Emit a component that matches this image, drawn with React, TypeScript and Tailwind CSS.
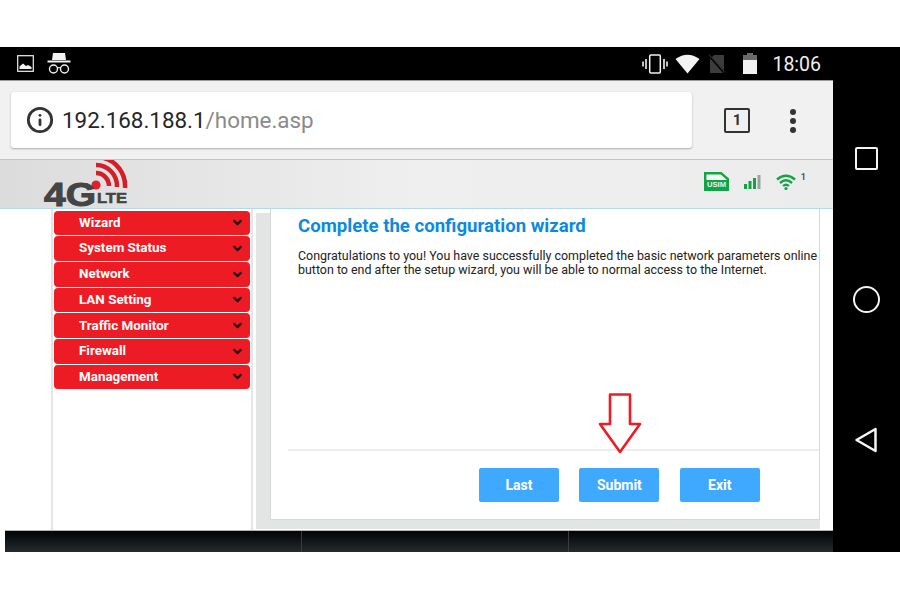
import React from 'react';
import { ChevronDown, Info } from 'lucide-react';

const menuItems = ['Wizard', 'System Status', 'Network', 'LAN Setting', 'Traffic Monitor', 'Firewall', 'Management'];
const roboto = { fontFamily: 'Roboto, sans-serif' };

const StatusBar = () => (
  <div className="flex h-[33px] items-center bg-black pl-[17px] pr-[12px]">
    <svg width="17" height="17" viewBox="0 0 17 17" className="mr-[13px]">
      <rect x="0.7" y="0.7" width="15.6" height="15.6" fill="none" stroke="#f2f2f2" strokeWidth="1.2" />
      <path d="M2.5 14 V11.5 L6 8.5 L9 11 L11 10 L14.5 12 V14 Z" fill="#f2f2f2" />
    </svg>
    <svg width="24" height="23" viewBox="0 0 24 23">
      <path d="M6 1 H18 L19 8 H5 Z" fill="#f2f2f2" />
      <rect x="0.5" y="8.5" width="23" height="2" fill="#f2f2f2" />
      <circle cx="6.5" cy="17" r="4" fill="none" stroke="#f2f2f2" strokeWidth="1.4" />
      <circle cx="17.5" cy="17" r="4" fill="none" stroke="#f2f2f2" strokeWidth="1.4" />
      <path d="M10.5 16 Q12 15 13.5 16" fill="none" stroke="#f2f2f2" strokeWidth="1.2" />
    </svg>
    <div className="ml-auto flex items-center">
      <svg width="26" height="20" viewBox="0 0 26 20">
        <rect x="7.7" y="1" width="10.6" height="18" rx="1" fill="none" stroke="#f2f2f2" strokeWidth="1.5" />
        <path d="M4 5 V15 M22 5 V15" stroke="#f2f2f2" strokeWidth="1.6" />
        <path d="M1 7.5 V12.5 M25 7.5 V12.5" stroke="#f2f2f2" strokeWidth="1.6" />
      </svg>
      <svg width="25" height="20" viewBox="0 0 25 20" className="ml-[7px]">
        <path d="M0.5 5 Q12.5 -3.5 24.5 5 L12.5 19.5 Z" fill="#f2f2f2" />
      </svg>
      <svg width="18" height="20" viewBox="0 0 18 20" className="ml-[8px]">
        <path d="M6 1 H16 V19 H2 V5 Z" fill="#3c3c3c" />
        <path d="M1 1.5 L17 19.5" stroke="#000" strokeWidth="2.2" />
        <path d="M1 0.5 L17 18.5" stroke="#3c3c3c" strokeWidth="1" />
      </svg>
      <svg width="14" height="21" viewBox="0 0 14 21" className="ml-[17px]">
        <path d="M4.5 0 H9.5 V2 H14 V21 H0 V2 H4.5 Z" fill="#f2f2f2" />
        <path d="M4.5 0 H9.5 V2 H14 V7 H0 V2 H4.5 Z" fill="#6a6a6a" />
      </svg>
      <span className="ml-[15px] mt-[2px] text-[19.5px] leading-none text-[#f0f0f0]" style={roboto}>18:06</span>
    </div>
  </div>
);

const Toolbar = () => (
  <div className="flex h-[80px] items-start border-t border-b border-[#9a9a9a] border-b-[#c4c4c4] bg-[#f1f1f1] pl-[11px] pt-[10px]">
    <div className="mt-px flex h-[56px] w-[681px] items-center rounded-[3px] bg-white pl-[15px] shadow-[0_1px_2px_rgba(0,0,0,0.3)]">
      <Info size={28} strokeWidth={2.4} className="text-[#333]" />
      <span className="ml-[8px] text-[22.4px] leading-none" style={roboto}>
        <span className="text-[#262626]">192.168.188.1</span>
        <span className="text-[#8a8a8a]">/home.asp</span>
      </span>
    </div>
    <div className="ml-[32px] mt-[17px] flex h-[25px] w-[26px] items-center justify-center rounded-[2px] border-[2.5px] border-[#333] text-[15px] font-bold text-[#333]" style={roboto}>1</div>
    <div className="ml-[40px] mt-[18px] flex flex-col gap-[3px]">
      <span className="h-[6px] w-[6px] rounded-full bg-[#333]" />
      <span className="h-[6px] w-[6px] rounded-full bg-[#333]" />
      <span className="h-[6px] w-[6px] rounded-full bg-[#333]" />
    </div>
  </div>
);

const RouterHeader = () => (
  <div className="flex h-[49px] items-start justify-between border-b border-[#b5dbe8] bg-gradient-to-r from-[#dcdcdc] via-[#efefef] to-[#ececec] pl-[43px] pr-[27px]">
    <svg width="86" height="56" viewBox="0 0 86 56" className="-mb-[8px]">
      <path d="M59 -2.5 A29 29 0 0 1 82 28" fill="none" stroke="#d0202a" strokeWidth="4.5" />
      <path d="M53 5 A21 21 0 0 1 74 27" fill="none" stroke="#d0202a" strokeWidth="4.5" />
      <path d="M53 13 A13 13 0 0 1 66 26" fill="none" stroke="#d0202a" strokeWidth="4.5" />
      <circle cx="53" cy="25" r="4.6" fill="#e0202a" />
      <text x="1" y="46" fontFamily="Liberation Sans, sans-serif" fontWeight="700" fontSize="33.5" textLength="52" lengthAdjust="spacingAndGlyphs" fill="#444" stroke="#444" strokeWidth="1">4G</text>
      <text x="54" y="43" fontFamily="Liberation Sans, sans-serif" fontWeight="700" fontSize="14" textLength="30" lengthAdjust="spacingAndGlyphs" fill="#444" stroke="#444" strokeWidth="0.5">LTE</text>
    </svg>
    <div className="flex items-start pt-[12px]">
      <svg width="25" height="19" viewBox="0 0 25 19">
        <path d="M1.2 1.2 H17 L23.8 7 V17.8 H1.2 Z" fill="#f4faf5" stroke="#12a345" strokeWidth="2.4" />
        <rect x="2" y="8" width="21" height="9" fill="#12a345" />
        <text x="3" y="15.2" fontFamily="Liberation Sans, sans-serif" fontWeight="700" fontSize="7" textLength="19" lengthAdjust="spacingAndGlyphs" fill="#e8f5ea">USIM</text>
      </svg>
      <svg width="17" height="14" viewBox="0 0 17 14" className="ml-[15px] mt-[3px]">
        <rect x="0" y="9" width="3" height="5" fill="#12a345" />
        <rect x="4.5" y="6" width="3" height="8" fill="#12a345" />
        <rect x="9" y="3" width="3" height="11" fill="#12a345" />
        <rect x="13.5" y="0" width="3" height="14" fill="#9aa5a0" />
      </svg>
      <svg width="20" height="16" viewBox="0 0 20 16" className="ml-[15px] mt-[2px]">
        <path d="M1 5.5 Q10 -2 19 5.5" fill="none" stroke="#12a345" strokeWidth="2.4" />
        <path d="M4 9 Q10 3.5 16 9" fill="none" stroke="#12a345" strokeWidth="2.4" />
        <path d="M7 12 Q10 9.5 13 12" fill="none" stroke="#12a345" strokeWidth="2.2" />
        <circle cx="10" cy="14.5" r="1.6" fill="#12a345" />
      </svg>
      <span className="ml-[5px] mt-px text-[9px] font-bold leading-none text-[#555]" style={roboto}>1</span>
    </div>
  </div>
);

const Sidebar = () => (
  <div className="ml-[51px] flex h-full w-[202px] flex-col gap-[1px] border-x-2 border-[#e6e6e6] px-px pt-[1.5px]">
    {menuItems.map((item) => (
      <div key={item} className="flex h-[24.7px] items-center justify-between rounded-[4px] bg-[#ed1c24] pl-[25px] pr-[6px] text-[13.4px] font-bold text-white" style={roboto}>
        {item}
        <ChevronDown size={13} strokeWidth={4} className="text-[#2a0c0c]" />
      </div>
    ))}
  </div>
);

const Wizard = () => (
  <div className="ml-[3px] flex h-[321px] w-[564px] flex-col self-start pt-[4px]">
    <div className="flex h-[316px] border-b-[9px] border-l-[14px] border-[#e3e5e4] bg-[#e3e5e4]">
      <div className="-mt-[4px] flex flex-1 flex-col overflow-hidden border-r border-b border-l border-[#d8d8d8] bg-white pl-[27px]" style={roboto}>
        <h1 className="mt-[6px] whitespace-nowrap text-[18.6px] font-bold leading-[22px] text-[#0b8ade]">Complete the configuration wizard</h1>
        <p className="mt-[12px] whitespace-nowrap text-[12.45px] leading-[14.3px] text-[#222]">
          Congratulations to you! You have successfully completed the basic network parameters online
          <br />
          button to end after the setup wizard, you will be able to normal access to the Internet.
        </p>
        <div className="-ml-[10px] mt-auto flex h-[70px] gap-[20.4px] border-t-2 border-[#ececec] pl-[191px] pt-[17px]">
          {['Last', 'Submit', 'Exit'].map((label) => (
            <button key={label} className="h-[34px] w-[80px] rounded-[2px] bg-[#3fa9ff] text-[14px] font-bold text-white">{label}</button>
          ))}
        </div>
      </div>
    </div>
  </div>
);

export default function App() {
  return (
    <div className="h-[600px] w-[900px] overflow-hidden bg-white">
      <div className="h-[47px]" />
      <div className="flex h-[505px] bg-black">
        <div className="flex w-[833px] flex-col bg-white">
          <StatusBar />
          <Toolbar />
          <RouterHeader />
          <div className="relative flex h-[321px]">
            <Sidebar />
            <Wizard />
            {/* red annotation arrow pasted on the screenshot */}
            <svg width="44" height="62" viewBox="0 0 44 62" className="absolute left-[598px] top-[184px]">
              <path d="M12 1.5 H32 V31 H42 L22 59 L2 31 H12 Z" fill="#fff" stroke="#ed1c24" strokeWidth="2.6" strokeLinejoin="round" />
            </svg>
          </div>
          <div className="ml-[5px] flex h-[22px] flex-1 border-t border-[#b5b5b5] bg-gradient-to-b from-[#040506] to-[#262b30]">
            <div className="h-full w-[297px] border-r border-[#3a3d40]" />
            <div className="h-full w-[267px] border-r border-[#3a3d40]" />
          </div>
        </div>
        <div className="flex w-[67px] flex-col items-center pt-[100px]">
          <div className="h-[23px] w-[23px] rounded-[2px] border-[2.5px] border-[#f4f4f4]" />
          <div className="mt-[116px] h-[27px] w-[27px] rounded-full border-[2.5px] border-[#f4f4f4]" />
          <svg width="24" height="26" viewBox="0 0 24 26" className="mt-[114px] -ml-[2px]">
            <path d="M21.5 2 V24 L2.5 13 Z" fill="none" stroke="#f4f4f4" strokeWidth="2.5" strokeLinejoin="round" />
          </svg>
        </div>
      </div>
    </div>
  );
}
